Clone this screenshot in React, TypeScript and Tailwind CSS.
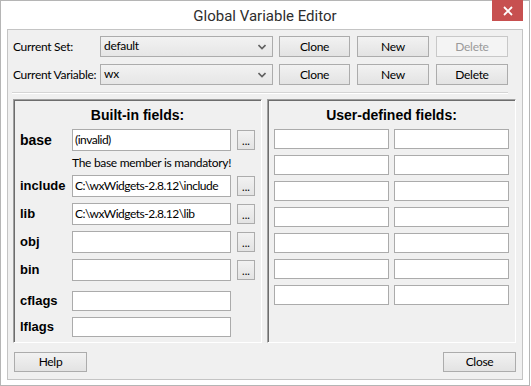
import React from "react";

const ui = "font-['Lato','Roboto',sans-serif] tracking-[-0.3px]";
const bold = "font-['Liberation_Sans','Arial',sans-serif] font-bold tracking-normal";

function Btn({ label, w, disabled }: { label: string; w: string; disabled?: boolean }) {
  return (
    <div
      className={`${w} h-[21px] flex items-center justify-center text-[12px] border ${
        disabled
          ? "border-[#c8c8c8] bg-[#f4f4f4] text-[#9a9a9a]"
          : "border-[#acacac] bg-gradient-to-b from-[#f2f2f2] to-[#e3e3e3] text-black"
      }`}
    >
      {label}
    </div>
  );
}

function Combo({ value }: { value: string }) {
  return (
    <div className="w-[173px] h-[21px] border border-[#acacac] bg-gradient-to-b from-[#f2f2f2] to-[#e6e6e6] flex items-center pl-[3px] pr-[6px] text-[12px] text-black">
      <span className="flex-1 mt-[-2px]">{value}</span>
      <svg width="8" height="6" viewBox="0 0 8 6">
        <path d="M0.5 1 L4 4.5 L7.5 1" stroke="#606060" strokeWidth="1.6" fill="none" />
      </svg>
    </div>
  );
}

function Input({ w, h, value }: { w: string; h: string; value?: string }) {
  return (
    <div className={`${w} ${h} border border-[#ababab] bg-white flex items-center pl-[2px] text-[12px] tracking-[-0.5px] text-black whitespace-nowrap overflow-hidden`}>
      {value}
    </div>
  );
}

function Dots() {
  return (
    <div className="w-[18px] h-[20px] ml-[6px] border border-[#acacac] bg-gradient-to-b from-[#f2f2f2] to-[#e3e3e3] flex items-end justify-center text-[11px] leading-[14px] pb-[1px] text-black tracking-[0px]">
      ...
    </div>
  );
}

function FieldRow({
  label,
  value,
  h,
  dots,
  mt,
  big,
}: {
  label: string;
  value?: string;
  h: string;
  dots?: boolean;
  mt: string;
  big?: boolean;
}) {
  return (
    <div className={`flex items-center ${mt}`}>
      <div className={`w-[58px] pl-[6px] ${bold} ${big ? "text-[14px]" : "text-[13px]"} text-black`}>{label}</div>
      <Input w="w-[159px]" h={h} value={value} />
      {dots && <Dots />}
    </div>
  );
}

export default function App() {
  return (
    <div className={`w-[531px] h-[386px] bg-white ${ui}`}>
      <div className="w-[530px] h-[386px] border border-[#b5b5b5] bg-white flex flex-col">
        <div className="h-[28px] relative flex items-center justify-center">
          <span className="text-[15px] text-[#2e2e2e] mt-[2px] font-['Roboto',sans-serif] tracking-normal">Global Variable Editor</span>
          <div className="absolute right-[6px] top-[-1px] w-[31px] h-[21px] bg-[#c75050] flex items-center justify-center">
            <svg width="10" height="10" viewBox="0 0 10 10">
              <path d="M1 1 L9 9 M9 1 L1 9" stroke="#ffffff" strokeWidth="1.8" />
            </svg>
          </div>
        </div>
        <div className="mx-[6px] mb-[5px] h-[351px] border border-[#c4c4c4] bg-[#f0f0f0] pl-[5px] pr-[6px] pt-[6px] flex flex-col">
          <div className="flex items-center h-[21px]">
            <div className="w-[87px] text-[12px] text-black whitespace-nowrap mt-[1px]">Current Set:</div>
            <Combo value="default" />
            <div className="ml-[6px]"><Btn label="Clone" w="w-[71px]" /></div>
            <div className="ml-[7px]"><Btn label="New" w="w-[72px]" /></div>
            <div className="ml-[7px]"><Btn label="Delete" w="w-[72px]" disabled /></div>
          </div>
          <div className="flex items-center h-[21px] mt-[7px]">
            <div className="w-[87px] text-[12px] text-black whitespace-nowrap mt-[1px]">Current Variable:</div>
            <Combo value="wx" />
            <div className="ml-[6px]"><Btn label="Clone" w="w-[71px]" /></div>
            <div className="ml-[7px]"><Btn label="New" w="w-[72px]" /></div>
            <div className="ml-[7px]"><Btn label="Delete" w="w-[72px]" /></div>
          </div>
          <div className="mt-[7px] ml-[-1px] w-[496px] h-[2px] border-t border-[#d5d5d5] border-b border-b-white" />
          <div className="mt-[5px] flex gap-[5px]">
            <div className="w-[249px] h-[244px] border border-t-[#a0a0a0] border-l-[#a0a0a0] border-r-white border-b-white shadow-[inset_1px_1px_0_#6d6d6d] flex flex-col">
              <div className={`h-[29px] flex items-center justify-center ${bold} text-[14px] text-black pt-[1px]`}>
                Built-in fields:
              </div>
              <FieldRow label="base" value="(invalid)" h="h-[22px]" dots mt="mt-0" big />
              <div className="h-[24px] pl-[58px] flex items-center text-[12px] text-black">The base member is mandatory!</div>
              <FieldRow label="include" value="C:\wxWidgets-2.8.12\include" h="h-[22px]" dots mt="mt-0" />
              <FieldRow label="lib" value="C:\wxWidgets-2.8.12\lib" h="h-[22px]" dots mt="mt-[6px]" />
              <FieldRow label="obj" h="h-[22px]" dots mt="mt-[6px]" />
              <FieldRow label="bin" h="h-[22px]" dots mt="mt-[6px]" />
              <FieldRow label="cflags" h="h-[20px]" mt="mt-[10px]" />
              <FieldRow label="lflags" h="h-[20px]" mt="mt-[6px]" />
            </div>
            <div className="w-[249px] h-[244px] border border-t-[#a0a0a0] border-l-[#a0a0a0] border-r-white border-b-white shadow-[inset_1px_1px_0_#6d6d6d] flex flex-col">
              <div className={`h-[29px] flex items-center justify-center ${bold} text-[14px] text-black pt-[1px]`}>
                User-defined fields:
              </div>
              <div className="pl-[6px] grid grid-cols-[115px_115px] gap-x-[5px] gap-y-[6px]">
                {Array.from({ length: 14 }).map((_, i) => (
                  <Input key={i} w="w-[115px]" h="h-[20px]" />
                ))}
              </div>
            </div>
          </div>
          <div className="mt-[9px] flex justify-between pl-[1px]">
            <div className="w-[73px] h-[20px] border border-[#acacac] bg-gradient-to-b from-[#f2f2f2] to-[#e3e3e3] flex items-center justify-center text-[12px] text-black">Help</div>
            <div className="w-[73px] h-[20px] border border-[#acacac] bg-gradient-to-b from-[#f2f2f2] to-[#e3e3e3] flex items-center justify-center text-[12px] text-black">Close</div>
          </div>
        </div>
      </div>
    </div>
  );
}
